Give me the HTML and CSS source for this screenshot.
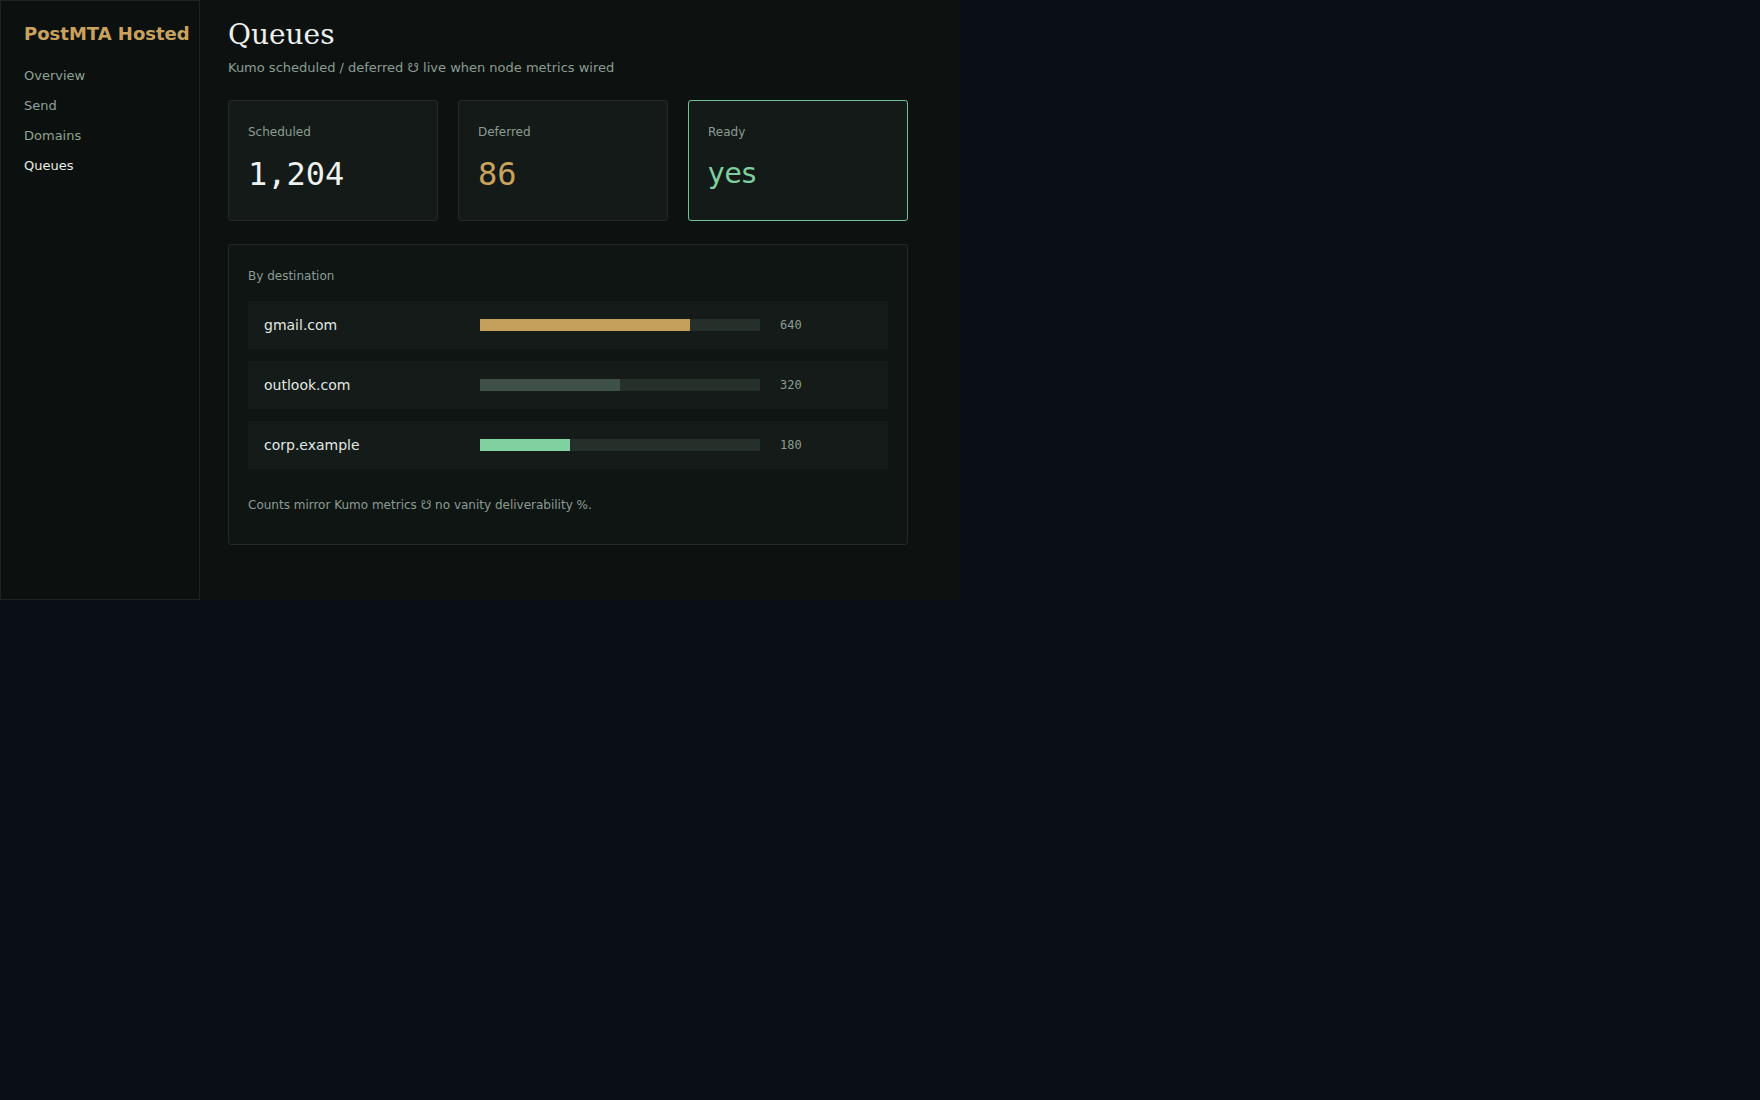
FILE: index.html
```html
<!DOCTYPE html>
<html lang="en">
<head>
  <meta charset="UTF-8">
  <meta name="viewport" content="width=device-width, initial-scale=1.0">
  <link rel="stylesheet" href="styles.css">
  <title>PostMTA Hosted - Queues</title>
</head>
<body>
  <div class="app">
    <aside class="sidebar">
      <div class="brand">PostMTA Hosted</div>
      <nav class="nav">
        <a href="#">Overview</a>
        <a href="#">Send</a>
        <a href="#">Domains</a>
        <a href="#" class="active">Queues</a>
      </nav>
    </aside>

    <main class="main">
      <h1>Queues</h1>
      <p class="sub">Kumo scheduled / deferred ☋ live when node metrics wired</p>

      <div class="cards">
        <div class="card">
          <div class="label">Scheduled</div>
          <div class="value num">1,204</div>
        </div>
        <div class="card">
          <div class="label">Deferred</div>
          <div class="value num gold">86</div>
        </div>
        <div class="card ok">
          <div class="label">Ready</div>
          <div class="value green">yes</div>
        </div>
      </div>

      <section class="panel">
        <div class="label">By destination</div>
        <div class="rows">
          <div class="row">
            <span class="domain">gmail.com</span>
            <div class="track"><div class="fill gold-bg" style="width:75%"></div></div>
            <span class="count">640</span>
          </div>
          <div class="row">
            <span class="domain">outlook.com</span>
            <div class="track"><div class="fill grey-bg" style="width:50%"></div></div>
            <span class="count">320</span>
          </div>
          <div class="row">
            <span class="domain">corp.example</span>
            <div class="track"><div class="fill green-bg" style="width:32%"></div></div>
            <span class="count">180</span>
          </div>
        </div>
        <p class="note">Counts mirror Kumo metrics ☋ no vanity deliverability %.</p>
      </section>
    </main>
  </div>
</body>
</html>
```

FILE: styles.css
```css
body{
  margin: 0;
  background-color: #0a0e17;
  font-family: "DejaVu Sans", sans-serif;
}
.app{
  display: flex;
  width: 960px;
  height: 600px;
  background-color: #0d1210;
}
.sidebar{
  width: 200px;
  box-sizing: border-box;
  padding: 22px 23px;
  border: 1px solid #1d2421;
  background-color: #0c110f;
}
.brand{
  font-size: 18px;
  font-weight: bold;
  line-height: 1.2;
  color: #c9a35e;
  margin-bottom: 16px;
  white-space: nowrap;
}
.nav{
  display: flex;
  flex-direction: column;
}
.nav a{
  font-size: 13px;
  line-height: 18px;
  padding: 6px 0;
  color: #8fa197;
  text-decoration: none;
}
.nav a.active{
  color: #e8ede9;
}
.main{
  width: 680px;
  padding: 18px 28px;
}
h1{
  margin: 0;
  font-family: "DejaVu Serif", serif;
  font-weight: normal;
  font-size: 28px;
  line-height: 1.2;
  color: #eef1ee;
}
.sub{
  margin: 7px 0 23px;
  font-size: 13px;
  line-height: 18px;
  color: #8c9c93;
}
.cards{
  display: grid;
  grid-template-columns: 210px 210px 1fr;
  gap: 20px;
}
.card{
  height: 121px;
  box-sizing: border-box;
  padding: 23px 19px;
  border: 1px solid #232b28;
  border-radius: 3px;
  background-color: #131a18;
}
.card.ok{
  border-color: #72c394;
}
.label{
  font-size: 12px;
  line-height: 17px;
  color: #8c9c93;
}
.value{
  margin-top: 14px;
  font-size: 28px;
  line-height: 38px;
  color: #eef1ee;
}
.value.num{
  font-family: "DejaVu Sans Mono", monospace;
  font-size: 32px;
}
.gold{
  color: #c9a35e;
}
.green{
  color: #7fcf9f;
}
.panel{
  margin-top: 23px;
  padding: 23px 19px 30px;
  border: 1px solid #232b28;
  border-radius: 3px;
  background-color: #0f1513;
}
.rows{
  display: flex;
  flex-direction: column;
  gap: 12px;
  margin-top: 16px;
}
.row{
  display: grid;
  grid-template-columns: 200px 280px auto;
  column-gap: 16px;
  align-items: center;
  height: 48px;
  padding: 0 16px;
  background-color: #141b19;
}
.domain{
  font-size: 14px;
  color: #e2e8e4;
}
.track{
  height: 12px;
  background-color: #25302b;
}
.fill{
  height: 100%;
}
.gold-bg{
  background-color: #c4a05a;
}
.grey-bg{
  background-color: #3f5049;
}
.green-bg{
  background-color: #80d0a0;
}
.count{
  margin-left: 4px;
  font-family: "DejaVu Sans Mono", monospace;
  font-size: 12px;
  color: #8c9c93;
}
.note{
  margin: 28px 0 0;
  font-size: 12px;
  line-height: 17px;
  color: #8c9c93;
}
```
